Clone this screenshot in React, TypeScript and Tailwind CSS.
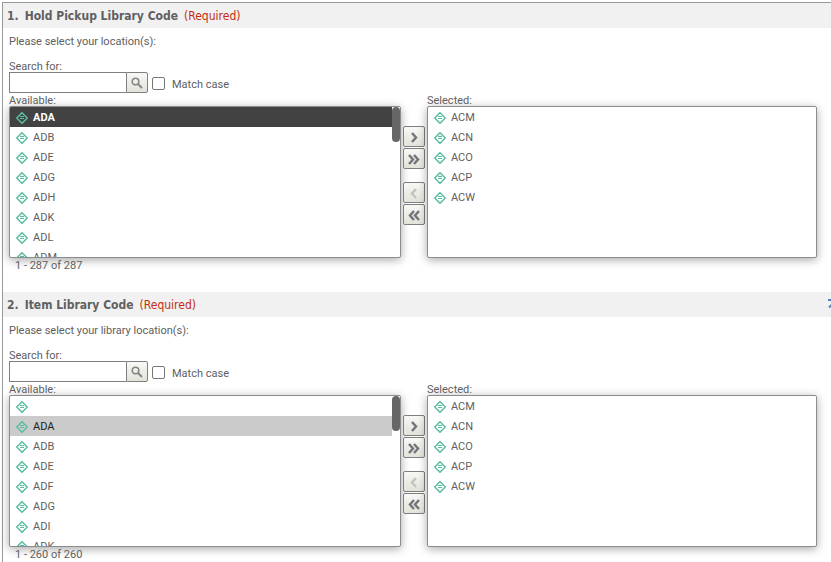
import { useId } from "react";

const selectedCodes = ["ACM", "ACN", "ACO", "ACP", "ACW"];

function ItemIcon() {
  return (
    <svg viewBox="0 0 12 12" className="mt-px size-3 shrink-0" fill="none" aria-hidden="true">
      <path d="M6 .7 11.300 6 6 11.300 .7 6Z" stroke="#5cbba5" strokeWidth="1.500" />
      <path d="M4 4.500h4M4 6.500h4" stroke="#5cbba5" strokeWidth="1" />
    </svg>
  );
}

type ListProps = { labelId: string; items: string[]; active?: string; tone?: string; scroll?: boolean };

function CodeList({ labelId, items, active, tone = "", scroll = false }: ListProps) {
  return (
    <div className="flex h-[152px] overflow-hidden rounded-xs border border-[#8c8c8c] bg-white shadow-[0_2px_10px_rgba(0,0,0,0.35)]">
      <ul role="listbox" aria-labelledby={labelId} className="min-w-0 flex-1">
        {items.map((code) => (
          <li
            key={code}
            role="option"
            aria-selected={code === active}
            className={`flex h-5 items-center gap-[5px] pl-1.5 ${code === active ? tone : ""}`}
          >
            <ItemIcon />
            <span className="mt-0.5">{code}</span>
          </li>
        ))}
      </ul>
      {scroll && (
        <div className="w-2">
          <div className="h-[35px] rounded-full bg-[#666]" />
        </div>
      )}
    </div>
  );
}

const arrows = {
  add: "M8 6 12 10.500 8 15",
  addAll: "M5 6 9 10.500 5 15M10 6 14 10.500 10 15",
  remove: "M12 6 8 10.500 12 15",
  removeAll: "M10 6 6 10.500 10 15M15 6 11 10.500 15 15",
};

function MoveButton({ kind, label, disabled = false }: { kind: keyof typeof arrows; label: string; disabled?: boolean }) {
  return (
    <button
      type="button"
      aria-label={label}
      disabled={disabled}
      className="flex h-[21px] items-center justify-center rounded-xs border border-[#7f7f7f] bg-linear-to-b from-[#f8f8f5] to-[#e3e3da] text-[#75757c] disabled:text-[#c4c4be]"
    >
      <svg viewBox="0 0 20 19" className="h-[19px] w-5" fill="none" stroke="currentColor" strokeWidth="2.500" aria-hidden="true">
        <path d={arrows[kind]} />
      </svg>
    </button>
  );
}

type PromptProps = {
  number: number;
  title: string;
  hint: string;
  items: string[];
  active: string;
  tone: string;
  range: string;
  topLink?: boolean;
};

function Prompt({ number, title, hint, items, active, tone, range, topLink = false }: PromptProps) {
  const id = useId();
  return (
    <section className="pb-[21px]">
      <header className="flex h-[25px] items-center overflow-hidden bg-[#f1f1f1] pl-1 font-['DejaVu_Sans_Condensed','DejaVu_Sans',sans-serif] text-[12px]">
        <h2 className="flex gap-1.5 font-bold whitespace-nowrap">
          <span>{number}.</span>
          <span>{title}</span>
        </h2>
        <span className="ml-1.5 text-[#c42e10]">(Required)</span>
        {topLink && (
          <button type="button" aria-label="Back to top" className="-mr-[9px] ml-auto text-[#5580bb]">
            <svg viewBox="0 0 12 14" className="h-3.5 w-3" fill="none" stroke="currentColor" strokeWidth="2" aria-hidden="true">
              <path d="M0 2h12M1 9.500 6 4.500 11 9.500M6 5v9" />
            </svg>
          </button>
        )}
      </header>
      <div className="pr-3.5 pl-1.5 leading-[14px]">
        <p className="mt-[7px] h-3">{hint}</p>
        <label htmlFor={`${id}-search`} className="mt-[13px] block h-3">Search for:</label>
        <div className="mb-px flex h-[21px]">
          <input id={`${id}-search`} type="text" className="w-[117px] border border-r-0 border-[#7f7f7f] bg-white px-1 outline-none" />
          <button type="button" aria-label="Search" className="flex w-[22px] items-center justify-center rounded-r-xs border border-[#7f7f7f] bg-linear-to-b from-[#f8f8f5] to-[#e3e3da]">
            <svg viewBox="0 0 12 12" className="size-3" fill="none" stroke="#858585" aria-hidden="true">
              <circle cx="4.500" cy="4.500" r="3.300" strokeWidth="1.6" />
              <path d="m7 7 4 4" strokeWidth="2" />
            </svg>
          </button>
          <label className="mt-0.5 ml-1 flex h-3.5 items-center gap-[7px] self-center">
            <input type="checkbox" className="size-[13px] appearance-none rounded-xs border border-[#767676] bg-white checked:bg-[#666]" />
            <span className="mt-0.5">Match case</span>
          </label>
        </div>
        <div className="grid grid-cols-[392fr_22px_390fr] gap-x-0.5">
          <div className="min-w-0">
            <div id={`${id}-available`} className="h-3">Available:</div>
            <CodeList labelId={`${id}-available`} items={items} active={active} tone={tone} scroll />
            <div className="mt-px h-3 pl-1.5">{range}</div>
          </div>
          <div className="flex flex-col gap-px pt-8">
            <MoveButton kind="add" label="Add" />
            <MoveButton kind="addAll" label="Add all" />
            <div className="h-[11px]" />
            <MoveButton kind="remove" label="Remove" disabled />
            <MoveButton kind="removeAll" label="Remove all" />
          </div>
          <div className="min-w-0">
            <div id={`${id}-selected`} className="h-3">Selected:</div>
            <CodeList labelId={`${id}-selected`} items={selectedCodes} />
          </div>
        </div>
      </div>
    </section>
  );
}

export default function App() {
  return (
    <div className="h-screen overflow-hidden bg-white pt-0.5 pl-0.5 font-[Roboto,sans-serif] text-[11px] text-[#606060]">
      <main className="min-h-full border-t border-l border-[#999]">
        <Prompt
          number={1}
          title="Hold Pickup Library Code"
          hint="Please select your location(s):"
          items={["ADA", "ADB", "ADE", "ADG", "ADH", "ADK", "ADL", "ADM"]}
          active="ADA"
          tone="bg-[#424242] font-bold text-white"
          range="1 - 287 of 287"
        />
        <Prompt
          number={2}
          title="Item Library Code"
          hint="Please select your library location(s):"
          items={["", "ADA", "ADB", "ADE", "ADF", "ADG", "ADI", "ADK"]}
          active="ADA"
          tone="bg-[#cbcbcb] text-[#222]"
          range="1 - 260 of 260"
          topLink
        />
      </main>
    </div>
  );
}
